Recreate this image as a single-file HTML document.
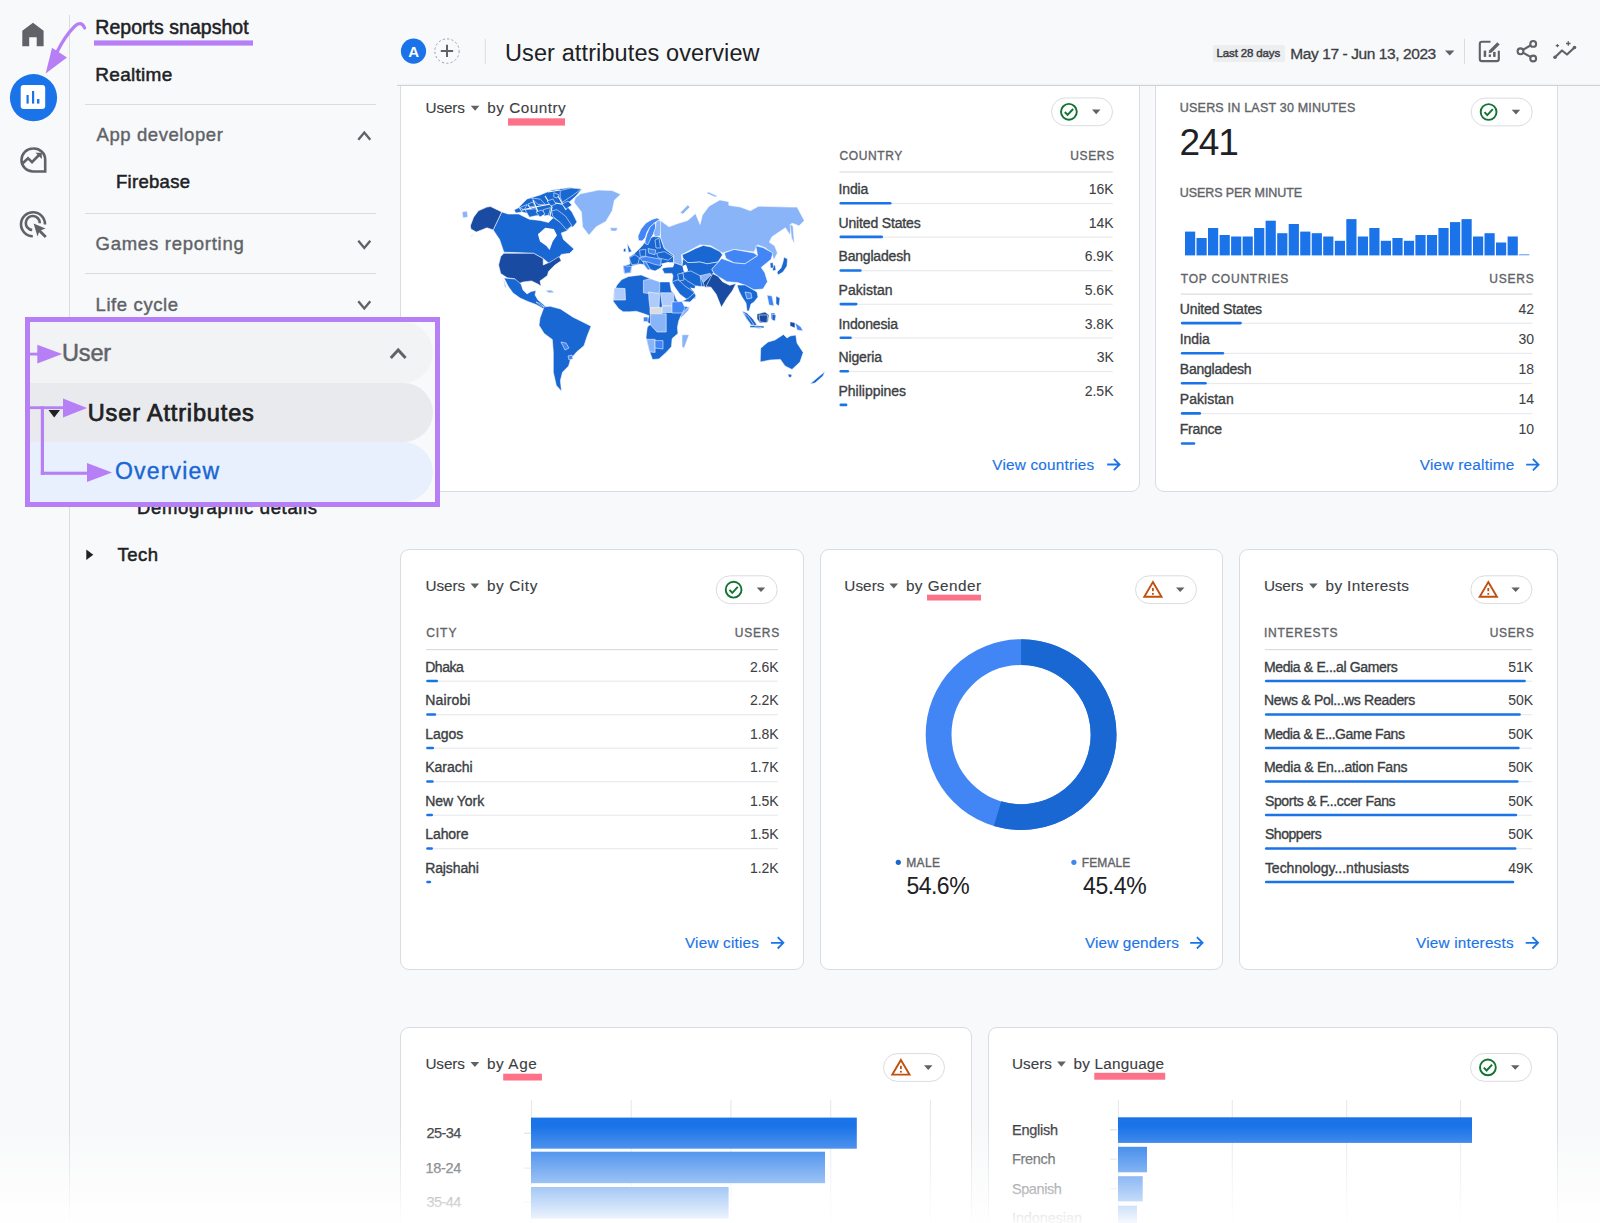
<!DOCTYPE html>
<html><head><meta charset="utf-8"><style>
html,body{margin:0;padding:0}
body{width:1600px;height:1223px;overflow:hidden;position:relative;background:#f8f9fa;font-family:"Liberation Sans",sans-serif}
.abs{position:absolute}
.t{position:absolute;white-space:pre;font-family:"Liberation Sans",sans-serif}
.card{position:absolute;box-sizing:border-box;background:#fff;border:1px solid #dadce0;border-radius:9px}
</style></head><body>
<div class="card" style="left:400.0px;top:71.6px;width:740.0px;height:420.4px"></div><div class="card" style="left:1155.0px;top:71.6px;width:403.2px;height:420.6px"></div><div class="card" style="left:400.0px;top:549.4px;width:403.6px;height:420.6px"></div><div class="card" style="left:819.7px;top:549.4px;width:403.0px;height:420.6px"></div><div class="card" style="left:1239.0px;top:549.4px;width:319.2px;height:420.6px"></div><div class="card" style="left:400.0px;top:1027.2px;width:571.5px;height:272.8px"></div><div class="card" style="left:987.7px;top:1027.2px;width:570.3px;height:272.8px"></div>
<svg class="abs" style="left:0;top:0" width="1600" height="1223"><path d="M470.7 105.7 H479.4 L475.1 110.8 Z" fill="#5f6368"/><rect x="508.0" y="118.3" width="57.0" height="7.3" fill="#fd7189"/><rect x="1051.5" y="97.9" width="61" height="27.8" rx="13.9" fill="#fff" stroke="#dadce0" stroke-width="1"/><circle cx="1068.9" cy="111.8" r="7.9" fill="none" stroke="#137333" stroke-width="1.9"/><path d="M1064.8 112.0 L1067.6 114.9 L1073.1 109.0" fill="none" stroke="#137333" stroke-width="1.9"/><path d="M1092.0 109.6 H1100.5 L1096.2 114.2 Z" fill="#5f6368"/><rect x="839.5" y="171.4" width="273.2" height="1.2" fill="#dadce0"/><rect x="839.5" y="202.9" width="273.2" height="1.2" fill="#e8eaed"/><rect x="839.5" y="202.0" width="52.0" height="2.6" rx="1.3" fill="#1a73e8"/><rect x="839.5" y="236.5" width="273.2" height="1.2" fill="#e8eaed"/><rect x="839.5" y="235.6" width="43.5" height="2.6" rx="1.3" fill="#1a73e8"/><rect x="839.5" y="270.1" width="273.2" height="1.2" fill="#e8eaed"/><rect x="839.5" y="269.2" width="22.2" height="2.6" rx="1.3" fill="#1a73e8"/><rect x="839.5" y="303.7" width="273.2" height="1.2" fill="#e8eaed"/><rect x="839.5" y="302.8" width="18.0" height="2.6" rx="1.3" fill="#1a73e8"/><rect x="839.5" y="337.3" width="273.2" height="1.2" fill="#e8eaed"/><rect x="839.5" y="336.4" width="12.3" height="2.6" rx="1.3" fill="#1a73e8"/><rect x="839.5" y="370.9" width="273.2" height="1.2" fill="#e8eaed"/><rect x="839.5" y="370.0" width="9.6" height="2.6" rx="1.3" fill="#1a73e8"/><rect x="839.5" y="403.6" width="7.9" height="2.6" rx="1.3" fill="#1a73e8"/><path d="M1107.2 464.5 H1119.4 M1113.9 458.8 L1119.6 464.5 L1113.9 470.2" fill="none" stroke="#1a73e8" stroke-width="1.8"/><rect x="1471.2" y="98.1" width="61" height="27.8" rx="13.9" fill="#fff" stroke="#dadce0" stroke-width="1"/><circle cx="1488.6" cy="112.0" r="7.9" fill="none" stroke="#137333" stroke-width="1.9"/><path d="M1484.5 112.2 L1487.3 115.1 L1492.8 109.2" fill="none" stroke="#137333" stroke-width="1.9"/><path d="M1511.7 109.8 H1520.2 L1516.0 114.4 Z" fill="#5f6368"/><rect x="1185.0" y="231.6" width="10.2" height="23.8" fill="#1a73e8"/><rect x="1196.5" y="238.0" width="10.2" height="17.4" fill="#1a73e8"/><rect x="1208.0" y="228.0" width="10.2" height="27.4" fill="#1a73e8"/><rect x="1219.6" y="235.0" width="10.2" height="20.4" fill="#1a73e8"/><rect x="1231.1" y="236.5" width="10.2" height="18.9" fill="#1a73e8"/><rect x="1242.6" y="236.5" width="10.2" height="18.9" fill="#1a73e8"/><rect x="1254.1" y="228.0" width="10.2" height="27.4" fill="#1a73e8"/><rect x="1265.6" y="220.7" width="10.2" height="34.7" fill="#1a73e8"/><rect x="1277.2" y="233.2" width="10.2" height="22.2" fill="#1a73e8"/><rect x="1288.7" y="224.0" width="10.2" height="31.4" fill="#1a73e8"/><rect x="1300.2" y="231.6" width="10.2" height="23.8" fill="#1a73e8"/><rect x="1311.7" y="233.2" width="10.2" height="22.2" fill="#1a73e8"/><rect x="1323.2" y="236.5" width="10.2" height="18.9" fill="#1a73e8"/><rect x="1334.8" y="240.8" width="10.2" height="14.6" fill="#1a73e8"/><rect x="1346.3" y="219.1" width="10.2" height="36.3" fill="#1a73e8"/><rect x="1357.8" y="236.5" width="10.2" height="18.9" fill="#1a73e8"/><rect x="1369.3" y="228.0" width="10.2" height="27.4" fill="#1a73e8"/><rect x="1380.8" y="240.8" width="10.2" height="14.6" fill="#1a73e8"/><rect x="1392.4" y="238.0" width="10.2" height="17.4" fill="#1a73e8"/><rect x="1403.9" y="240.8" width="10.2" height="14.6" fill="#1a73e8"/><rect x="1415.4" y="235.0" width="10.2" height="20.4" fill="#1a73e8"/><rect x="1426.9" y="235.0" width="10.2" height="20.4" fill="#1a73e8"/><rect x="1438.4" y="228.0" width="10.2" height="27.4" fill="#1a73e8"/><rect x="1450.0" y="222.1" width="10.2" height="33.3" fill="#1a73e8"/><rect x="1461.5" y="219.1" width="10.2" height="36.3" fill="#1a73e8"/><rect x="1473.0" y="236.5" width="10.2" height="18.9" fill="#1a73e8"/><rect x="1484.5" y="233.2" width="10.2" height="22.2" fill="#1a73e8"/><rect x="1496.0" y="242.5" width="10.2" height="12.9" fill="#1a73e8"/><rect x="1507.6" y="236.5" width="10.2" height="18.9" fill="#1a73e8"/><rect x="1519.1" y="254" width="10.2" height="1.4" fill="#8ab4f8"/><rect x="1180.8" y="293.5" width="351.6" height="1.2" fill="#dadce0"/><rect x="1180.8" y="322.7" width="351.6" height="1.2" fill="#e8eaed"/><rect x="1180.8" y="321.8" width="61.0" height="2.6" rx="1.3" fill="#1a73e8"/><rect x="1180.8" y="352.8" width="351.6" height="1.2" fill="#e8eaed"/><rect x="1180.8" y="351.9" width="43.4" height="2.6" rx="1.3" fill="#1a73e8"/><rect x="1180.8" y="382.9" width="351.6" height="1.2" fill="#e8eaed"/><rect x="1180.8" y="382.0" width="26.0" height="2.6" rx="1.3" fill="#1a73e8"/><rect x="1180.8" y="413.0" width="351.6" height="1.2" fill="#e8eaed"/><rect x="1180.8" y="412.1" width="20.3" height="2.6" rx="1.3" fill="#1a73e8"/><rect x="1180.8" y="442.2" width="14.5" height="2.6" rx="1.3" fill="#1a73e8"/><path d="M1526.2 464.7 H1538.4 M1532.9 459.0 L1538.6 464.7 L1532.9 470.4" fill="none" stroke="#1a73e8" stroke-width="1.8"/><path d="M470.5 583.5 H479.2 L474.9 588.6 Z" fill="#5f6368"/><rect x="716.2" y="575.8" width="61" height="27.8" rx="13.9" fill="#fff" stroke="#dadce0" stroke-width="1"/><circle cx="733.6" cy="589.7" r="7.9" fill="none" stroke="#137333" stroke-width="1.9"/><path d="M729.5 589.9 L732.3 592.8 L737.8 586.9" fill="none" stroke="#137333" stroke-width="1.9"/><path d="M756.7 587.5 H765.2 L761.0 592.1 Z" fill="#5f6368"/><rect x="426.2" y="649.0" width="351.7" height="1.2" fill="#dadce0"/><rect x="426.2" y="680.6" width="351.7" height="1.2" fill="#e8eaed"/><rect x="426.2" y="679.7" width="11.9" height="2.6" rx="1.3" fill="#1a73e8"/><rect x="426.2" y="714.1" width="351.7" height="1.2" fill="#e8eaed"/><rect x="426.2" y="713.2" width="10.0" height="2.6" rx="1.3" fill="#1a73e8"/><rect x="426.2" y="747.6" width="351.7" height="1.2" fill="#e8eaed"/><rect x="426.2" y="746.7" width="7.9" height="2.6" rx="1.3" fill="#1a73e8"/><rect x="426.2" y="781.1" width="351.7" height="1.2" fill="#e8eaed"/><rect x="426.2" y="780.2" width="7.5" height="2.6" rx="1.3" fill="#1a73e8"/><rect x="426.2" y="814.6" width="351.7" height="1.2" fill="#e8eaed"/><rect x="426.2" y="813.7" width="6.8" height="2.6" rx="1.3" fill="#1a73e8"/><rect x="426.2" y="848.1" width="351.7" height="1.2" fill="#e8eaed"/><rect x="426.2" y="847.2" width="6.8" height="2.6" rx="1.3" fill="#1a73e8"/><rect x="426.2" y="880.7" width="5.0" height="2.6" rx="1.3" fill="#1a73e8"/><path d="M771.0 942.8 H783.2 M777.7 937.1 L783.4 942.8 L777.7 948.5" fill="none" stroke="#1a73e8" stroke-width="1.8"/><path d="M889.4 583.5 H898.1 L893.8 588.6 Z" fill="#5f6368"/><rect x="927.0" y="594.7" width="54.0" height="5.8" fill="#fd7189"/><rect x="1135.5" y="575.8" width="61" height="27.8" rx="13.9" fill="#fff" stroke="#dadce0" stroke-width="1"/><path d="M1152.9 582.1 L1161.5 596.8 L1144.3 596.8 Z" fill="none" stroke="#c0500e" stroke-width="1.9" stroke-linejoin="miter"/><rect x="1152.0" y="588.0" width="1.8" height="3.2" fill="#c0500e"/><rect x="1152.0" y="593.0" width="1.8" height="1.8" fill="#c0500e"/><path d="M1176.0 587.5 H1184.5 L1180.2 592.1 Z" fill="#5f6368"/><circle cx="1021.1" cy="734.6" r="82.5" fill="none" stroke="#4285f4" stroke-width="25.8"/><path d="M1021.1 652.1 A82.5 82.5 0 1 1 997.59 813.68" fill="none" stroke="#1967d2" stroke-width="25.8"/><circle cx="898.3" cy="862.3" r="2.6" fill="#1967d2"/><circle cx="1073.9" cy="862.3" r="2.6" fill="#4285f4"/><path d="M1190.2 942.8 H1202.4 M1196.9 937.1 L1202.6 942.8 L1196.9 948.5" fill="none" stroke="#1a73e8" stroke-width="1.8"/><path d="M1309.0 583.5 H1317.7 L1313.3 588.6 Z" fill="#5f6368"/><rect x="1470.9" y="575.8" width="61" height="27.8" rx="13.9" fill="#fff" stroke="#dadce0" stroke-width="1"/><path d="M1488.3 582.1 L1496.9 596.8 L1479.7 596.8 Z" fill="none" stroke="#c0500e" stroke-width="1.9" stroke-linejoin="miter"/><rect x="1487.4" y="588.0" width="1.8" height="3.2" fill="#c0500e"/><rect x="1487.4" y="593.0" width="1.8" height="1.8" fill="#c0500e"/><path d="M1511.4 587.5 H1519.9 L1515.7 592.1 Z" fill="#5f6368"/><rect x="1264.9" y="649.0" width="267.4" height="1.2" fill="#dadce0"/><rect x="1264.9" y="680.6" width="267.4" height="1.2" fill="#e8eaed"/><rect x="1264.9" y="679.7" width="260.9" height="2.6" rx="1.3" fill="#1a73e8"/><rect x="1264.9" y="714.1" width="267.4" height="1.2" fill="#e8eaed"/><rect x="1264.9" y="713.2" width="255.9" height="2.6" rx="1.3" fill="#1a73e8"/><rect x="1264.9" y="747.6" width="267.4" height="1.2" fill="#e8eaed"/><rect x="1264.9" y="746.7" width="254.8" height="2.6" rx="1.3" fill="#1a73e8"/><rect x="1264.9" y="781.1" width="267.4" height="1.2" fill="#e8eaed"/><rect x="1264.9" y="780.2" width="253.7" height="2.6" rx="1.3" fill="#1a73e8"/><rect x="1264.9" y="814.6" width="267.4" height="1.2" fill="#e8eaed"/><rect x="1264.9" y="813.7" width="252.3" height="2.6" rx="1.3" fill="#1a73e8"/><rect x="1264.9" y="848.1" width="267.4" height="1.2" fill="#e8eaed"/><rect x="1264.9" y="847.2" width="251.5" height="2.6" rx="1.3" fill="#1a73e8"/><rect x="1264.9" y="880.7" width="249.4" height="2.6" rx="1.3" fill="#1a73e8"/><path d="M1525.7 942.8 H1537.9 M1532.4 937.1 L1538.1 942.8 L1532.4 948.5" fill="none" stroke="#1a73e8" stroke-width="1.8"/><path d="M470.5 1061.9 H479.2 L474.9 1067.0 Z" fill="#5f6368"/><rect x="503.2" y="1073.7" width="38.7" height="6.8" fill="#fd7189"/><rect x="883.5" y="1053.6" width="61" height="27.8" rx="13.9" fill="#fff" stroke="#dadce0" stroke-width="1"/><path d="M900.9 1059.9 L909.5 1074.6 L892.3 1074.6 Z" fill="none" stroke="#c0500e" stroke-width="1.9" stroke-linejoin="miter"/><rect x="900.0" y="1065.8" width="1.8" height="3.2" fill="#c0500e"/><rect x="900.0" y="1070.8" width="1.8" height="1.8" fill="#c0500e"/><path d="M924.0 1065.3 H932.5 L928.2 1069.9 Z" fill="#5f6368"/><rect x="530.9" y="1100" width="1.2" height="130" fill="#e8eaed"/><rect x="630.6" y="1100" width="1.2" height="130" fill="#e8eaed"/><rect x="730.3" y="1100" width="1.2" height="130" fill="#e8eaed"/><rect x="830.1" y="1100" width="1.2" height="130" fill="#e8eaed"/><rect x="929.8" y="1100" width="1.2" height="130" fill="#e8eaed"/><rect x="531" y="1117.6" width="325.8" height="31.1" fill="#1a73e8"/><rect x="531" y="1151.7" width="294.0" height="31.5" fill="#1a73e8"/><rect x="531" y="1187" width="197.6" height="31.5" fill="#1a73e8"/><rect x="524" y="1132.7" width="7" height="1" fill="#dadce0"/><rect x="524" y="1167.6" width="7" height="1" fill="#dadce0"/><rect x="524" y="1201.4" width="7" height="1" fill="#dadce0"/><path d="M1057.1 1061.6 H1065.8 L1061.4 1066.7 Z" fill="#5f6368"/><rect x="1094.3" y="1072.8" width="70.9" height="6.9" fill="#fd7189"/><rect x="1470.5" y="1053.5" width="61" height="27.8" rx="13.9" fill="#fff" stroke="#dadce0" stroke-width="1"/><circle cx="1487.9" cy="1067.4" r="7.9" fill="none" stroke="#137333" stroke-width="1.9"/><path d="M1483.8 1067.6 L1486.6 1070.5 L1492.1 1064.6" fill="none" stroke="#137333" stroke-width="1.9"/><path d="M1511.0 1065.2 H1519.5 L1515.2 1069.8 Z" fill="#5f6368"/><rect x="1117.8" y="1100" width="1.2" height="130" fill="#e8eaed"/><rect x="1231.7" y="1100" width="1.2" height="130" fill="#e8eaed"/><rect x="1346.0" y="1100" width="1.2" height="130" fill="#e8eaed"/><rect x="1459.9" y="1100" width="1.2" height="130" fill="#e8eaed"/><rect x="1118" y="1117.3" width="354.0" height="25.6" fill="#1a73e8"/><rect x="1118" y="1146.8" width="29.0" height="25.5" fill="#1a73e8"/><rect x="1118" y="1176.2" width="24.7" height="25.2" fill="#1a73e8"/><rect x="1118" y="1205.7" width="19.0" height="25.3" fill="#1a73e8"/><rect x="1110" y="1129.3" width="7" height="1" fill="#dadce0"/><rect x="1110" y="1158.7" width="7" height="1" fill="#dadce0"/><rect x="1110" y="1188.2" width="7" height="1" fill="#dadce0"/><rect x="1110" y="1217.7" width="7" height="1" fill="#dadce0"/><polygon points="501.7,211.9 508.1,214 518.7,214 529.4,219.3 540,220.4 548.5,222.5 553.8,217.2 561.2,221.4 566.6,225.7 571.9,225.7 566.6,231 561.2,233.1 563.4,239.5 574,249.1 569.7,253.3 561.2,254.4 557,260.7 548.5,262.9 543.2,258.6 533.6,253.3 503.9,252.2 499.6,239.5 493.2,229.9" fill="#1967d2" stroke="#fff" stroke-width="0.55" stroke-linejoin="round"/>
<polygon points="537.9,234.2 545.3,227.8 553.8,228.9 557,235.2 552.7,241.6 549.6,250.1 546.4,245.9 540,241.6" fill="#fff" stroke="#fff" stroke-width="0" stroke-linejoin="round"/>
<polygon points="470.4,225.7 473.6,217.2 478.4,210.8 486.9,207.1 490.6,206.6 501.7,211.9 493.2,229.9 486.9,227.8 481.6,229.9 476.2,232.1 470.9,228.9" fill="#1a4ba3" stroke="#fff" stroke-width="0.55" stroke-linejoin="round"/>
<polygon points="476,232 470.4,237.4 472,235.5" fill="#1a4ba3" stroke="#fff" stroke-width="0.55" stroke-linejoin="round"/>
<polygon points="462,212 467,211 468,217 463,218" fill="#8ab4f8" stroke="#fff" stroke-width="0.55" stroke-linejoin="round"/>
<polygon points="519,207 527,199 540,195 552,190 570,187.5 582,189 576,196 566,205 572,212 577,222 573,227 567,226 560,222 552,217 545,214 538,216 530,214 522,212" fill="#1967d2" stroke="#fff" stroke-width="0.55" stroke-linejoin="round"/>
<polyline points="522,210 540,206 556,203 566,205" fill="none" stroke="#fff" stroke-width="1.1"/>
<polyline points="545,196 552,207 550,216" fill="none" stroke="#fff" stroke-width="1.1"/>
<polyline points="533,200 538,212" fill="none" stroke="#fff" stroke-width="1.1"/>
<polyline points="558,196 566,210" fill="none" stroke="#fff" stroke-width="1.1"/>
<polyline points="528,205 534,213" fill="none" stroke="#fff" stroke-width="1.1"/>
<polyline points="548,192 560,190" fill="none" stroke="#fff" stroke-width="1.1"/>
<polygon points="560.2,190.6 570.8,188 581.4,189 571.9,195.9 562.3,202.3 560.2,197" fill="#1967d2" stroke="#fff" stroke-width="0.55" stroke-linejoin="round"/>
<polygon points="551.7,210.8 557,209.7 565.5,216.1 571.9,225.7 566.6,229.9 560.2,222.5 552.7,216.1" fill="#1967d2" stroke="#fff" stroke-width="0.55" stroke-linejoin="round"/>
<polygon points="525.1,209.7 535.7,208.7 538.9,215.1 529.4,217.2" fill="#1967d2" stroke="#fff" stroke-width="0.55" stroke-linejoin="round"/>
<polygon points="519.8,207.6 527.2,204.4 524.1,209.7" fill="#1967d2" stroke="#fff" stroke-width="0.55" stroke-linejoin="round"/>
<polygon points="531.5,198 540,199.1 545.3,204.4 537.9,204.4" fill="#1967d2" stroke="#fff" stroke-width="0.55" stroke-linejoin="round"/>
<polygon points="543.2,209.7 550.6,207.6 548.5,215.1 544.2,216.1" fill="#1967d2" stroke="#fff" stroke-width="0.55" stroke-linejoin="round"/>
<polygon points="553.8,192.7 559.1,194.9 557,198 553.8,197" fill="#1967d2" stroke="#fff" stroke-width="0.55" stroke-linejoin="round"/>
<polygon points="514,210 519,207.5 522,212 516,213" fill="#1967d2" stroke="#fff" stroke-width="0.55" stroke-linejoin="round"/>
<polygon points="536,212 542,210 545,214 540,217" fill="#1967d2" stroke="#fff" stroke-width="0.55" stroke-linejoin="round"/>
<polygon points="528,204 533,202 535,206 530,207" fill="#1967d2" stroke="#fff" stroke-width="0.55" stroke-linejoin="round"/>
<polygon points="547,201 553,199 556,204 551,206" fill="#1967d2" stroke="#fff" stroke-width="0.55" stroke-linejoin="round"/>
<polygon points="562,204 568,201 572,205 566,209" fill="#1967d2" stroke="#fff" stroke-width="0.55" stroke-linejoin="round"/>
<polygon points="503.9,253.3 533.6,253.3 543.2,258.6 543.2,265 550.6,261.8 559.1,256.5 561.2,260.7 554.9,265 548.5,271.4 547.4,275.6 540,280.9 541.1,286.2 537.9,284.1 531.5,280.9 523,282 517.7,284.1 514.5,278.8 507.1,277.7 500.7,273.5 498.6,265 500.7,256.5" fill="#1a4ba3" stroke="#fff" stroke-width="0.55" stroke-linejoin="round"/>
<polygon points="504,278 515,279 521,284 523,290 527,294 531,291.5 536,290.5 535,295 538,300 544,305 547,308 543,308.5 536,304.5 529,302 520,298 513,293 508,286" fill="#1967d2" stroke="#fff" stroke-width="0.55" stroke-linejoin="round"/>
<polygon points="503.2,278.2 506.2,287.4 505,287" fill="#1967d2" stroke="#fff" stroke-width="0.55" stroke-linejoin="round"/>
<polygon points="536,302 540,303.5 544,306.5 541,306" fill="#1967d2" stroke="#fff" stroke-width="0.55" stroke-linejoin="round"/>
<polygon points="545,290.5 551,290 555,292.5 549,293" fill="#8ab4f8" stroke="#fff" stroke-width="0.55" stroke-linejoin="round"/>
<polygon points="575.1,198 580.4,193.8 598.4,190.1 612.2,190.6 620.7,194.3 614.4,200.2 612.2,210.8 605.9,221.4 596.3,226.7 588.9,235.2 582.5,226.7 581.4,211.9 574,202.3" fill="#8ab4f8" stroke="#fff" stroke-width="0.55" stroke-linejoin="round"/>
<polygon points="610.1,227.8 617.6,227.8 616.5,231 611.2,231" fill="#8ab4f8" stroke="#fff" stroke-width="0.55" stroke-linejoin="round"/>
<polygon points="544.1,306.8 550.2,306.3 560.4,308.9 566.6,312.9 572.7,317 582.9,322.1 591.1,326.2 587,336.5 584,345.7 576.8,351.8 570.7,358.9 568.6,366.1 562.5,372.2 560.4,380.4 561.5,391.2 556.3,385.5 553.3,372.2 553.3,351.8 552.3,339.5 544.1,333.4 539,325.2 540,318.1" fill="#1967d2" stroke="#fff" stroke-width="0.55" stroke-linejoin="round"/>
<polygon points="561,342 566,343 569,348 565,350" fill="#4285f4" stroke="#fff" stroke-width="0.55" stroke-linejoin="round"/>
<polygon points="568,356 572,355 573,359 569,360" fill="#4285f4" stroke="#fff" stroke-width="0.55" stroke-linejoin="round"/>
<polygon points="629,257 634,254 638,250 642,246 645,242 650,238 655,236 660.5,237.6 664.4,248.5 673.7,255.5 673.7,262.5 670,263 662,266 660.5,268 655,271 650.4,269.5 645,265 640,264 632,266 631,273 624,273.5 623,266 630,264" fill="#1967d2" stroke="#fff" stroke-width="0.55" stroke-linejoin="round"/>
<polygon points="638,236 641,229 646,223 652,219.5 657,218 660,219.5 655,222.5 650,227 647,232 645,238 642,241 638.5,240.5" fill="#4285f4" stroke="#fff" stroke-width="0.55" stroke-linejoin="round"/>
<polygon points="645,241 647,234 650,227 655,222.5 656,228 654,233 651,238 648,244.6 645.5,244" fill="#4285f4" stroke="#fff" stroke-width="0.55" stroke-linejoin="round"/>
<polygon points="655.5,228 656,222 659,220 661.5,222.5 661.5,230 660,236 655,237 653.5,233" fill="#8ab4f8" stroke="#fff" stroke-width="0.55" stroke-linejoin="round"/>
<polygon points="627.1,243.1 631.8,251.6 628.6,252.4 627.9,248.5" fill="#1967d2" stroke="#fff" stroke-width="0.55" stroke-linejoin="round"/>
<polygon points="623.5,249 625.5,248 626,251.5 623.5,252" fill="#1967d2" stroke="#fff" stroke-width="0.55" stroke-linejoin="round"/>
<polygon points="629.4,257.8 634.9,254.7 639.5,257.8 638,264 631.8,264.8 630.2,260.9" fill="#1967d2" stroke="#fff" stroke-width="0.55" stroke-linejoin="round"/>
<polygon points="623.2,265.6 631.8,266.4 630.2,272.6 624.8,273.4" fill="#4285f4" stroke="#fff" stroke-width="0.55" stroke-linejoin="round"/>
<polygon points="639.5,250.1 645.7,249.3 645.7,256.3 640.3,256.3" fill="#1967d2" stroke="#fff" stroke-width="0.55" stroke-linejoin="round"/>
<polygon points="648,248.5 655.8,250.1 655,254.7 648.8,253.2" fill="#4285f4" stroke="#fff" stroke-width="0.55" stroke-linejoin="round"/>
<polygon points="656.6,253.2 664.4,251.6 672.9,256.3 668.3,260.2 658.2,257.8" fill="#1967d2" stroke="#fff" stroke-width="0.55" stroke-linejoin="round"/>
<polygon points="639.5,257.8 646,256.5 653.5,257.8 661.3,259.4 660.5,265.6 653.5,264 648,262 643,262" fill="#4285f4" stroke="#fff" stroke-width="0.55" stroke-linejoin="round"/>
<polygon points="643.4,261 646,262 650.4,269.5 648,270 644,265" fill="#4285f4" stroke="#fff" stroke-width="0.55" stroke-linejoin="round"/>
<polygon points="655,240 659,238 660.5,248 656,248" fill="#1967d2" stroke="#fff" stroke-width="0.55" stroke-linejoin="round"/>
<polygon points="662,268.7 678.4,267.9 679.1,271.8 664.4,273.4" fill="#1967d2" stroke="#fff" stroke-width="0.55" stroke-linejoin="round"/>
<polygon points="660.5,220.5 669,226.8 677.6,223.6 687.7,220.5 695.5,213.5 700.1,224.4 702.4,215.1 709,206.2 719.8,199.9 728.8,201.7 728.8,205.3 740.5,207.1 750.4,210.7 758.5,206.2 790,207.1 797.1,207.1 804.3,220.6 798.9,226 795.3,224.2 791.7,223.3 789.9,235 785.4,227.8 772,236.8 769.3,242.2 774.7,245.8 777.4,253 773.8,260.2 772,253 764.8,247.6 757.6,244.9 754,252.1 734.2,249.4 722.5,253 710.8,245.8 700,244.9 687.7,251.6 681.5,254.7 682.2,265.6 673.7,262.5 673.7,255.5 664.4,248.5 660.5,237.6" fill="#8ab4f8" stroke="#fff" stroke-width="0.55" stroke-linejoin="round"/>
<polygon points="680,212.8 687.7,205 690,207 683,214" fill="#8ab4f8" stroke="#fff" stroke-width="0.55" stroke-linejoin="round"/>
<polygon points="708,191.8 718,196.3 715,197 707,193.5" fill="#8ab4f8" stroke="#fff" stroke-width="0.55" stroke-linejoin="round"/>
<polygon points="790,224.2 793,226 794.4,244 791.5,238" fill="#8ab4f8" stroke="#fff" stroke-width="0.55" stroke-linejoin="round"/>
<polygon points="682.2,254.7 687.7,252.4 695.5,248.5 703.2,245.4 711,247 720,251.6 722.5,254.8 718,262 707.2,263.8 700,262 692.3,262.5 687.7,262.5 683,258.6" fill="#1967d2" stroke="#fff" stroke-width="0.55" stroke-linejoin="round"/>
<polygon points="690.8,265 703.2,265.6 708,268 703.2,271 693,270" fill="#1967d2" stroke="#fff" stroke-width="0.55" stroke-linejoin="round"/>
<polygon points="724.3,253 734.2,249.4 754,253 757.6,255.7 745,263.8 734.2,262.9 726,258.4" fill="#4285f4" stroke="#fff" stroke-width="0.55" stroke-linejoin="round"/>
<polygon points="711.7,269.2 721.6,258.4 734.2,262.9 745,263.8 757.6,255.7 755.8,245.8 763,247.6 772.9,253 771.1,259.3 761.2,267.4 764.8,272.7 767.5,281.7 763,289 754,289.8 745,285.3 737.8,282.6 727,281.7 718,276.3 713.5,272.7" fill="#4285f4" stroke="#fff" stroke-width="0.55" stroke-linejoin="round"/>
<polygon points="772,266 775,265 776,270 773,271" fill="#1967d2" stroke="#fff" stroke-width="0.55" stroke-linejoin="round"/>
<polygon points="784,257 787.5,259 787,266 783,272 778,275 777,272 781,268 783,262" fill="#1967d2" stroke="#fff" stroke-width="0.55" stroke-linejoin="round"/>
<polygon points="770,263 773,262.5 773.5,268 770.5,268" fill="#1967d2" stroke="#fff" stroke-width="0.55" stroke-linejoin="round"/>
<polygon points="673.7,262.5 682.2,265.6 683,258.6 687.7,262.5 692.3,262.5 700,262 707.2,263.8 718,262 721.6,258.4 711.7,269.2 713.5,272.7 710.8,277.2 706,286.5 701.7,286.6 695.5,285.8 693.9,292 695.5,298.2 687.7,300 680,294.3 674.5,286.6 672,281.9 673,276 672,273.4 664.4,273.4 662,268.7 670,265" fill="#1967d2" stroke="#fff" stroke-width="0.55" stroke-linejoin="round"/>
<polygon points="682.5,266 686,264.5 688,270 686.5,273.5 683.5,271" fill="#fff" stroke="#fff" stroke-width="0" stroke-linejoin="round"/>
<polygon points="661,263.8 668,262 674.5,263.2 673,267.2 664,267.8" fill="#fff" stroke="#fff" stroke-width="0" stroke-linejoin="round"/>
<polygon points="690,287.5 695,288.5 697,291 693,291" fill="#fff" stroke="#fff" stroke-width="0" stroke-linejoin="round"/>
<polygon points="682.2,272.6 690.8,271 700.1,275.7 701.7,286.6 695.5,285.8 687.7,281.1 683,277.2" fill="#1967d2" stroke="#fff" stroke-width="0.55" stroke-linejoin="round"/>
<polygon points="700.1,275.7 710.2,273.4 711,278 703.2,282.7" fill="#8ab4f8" stroke="#fff" stroke-width="0.55" stroke-linejoin="round"/>
<polygon points="703.2,282.7 711,274.9 714.9,278 711,287.3 704.8,287.3" fill="#1a4ba3" stroke="#fff" stroke-width="0.55" stroke-linejoin="round"/>
<polygon points="672.1,281.9 678.4,279.6 684.6,285.8 693.9,292 695.5,298.2 687.7,300 680,294.3 674.5,286.6" fill="#1967d2" stroke="#fff" stroke-width="0.55" stroke-linejoin="round"/>
<polygon points="677.6,274.1 683,273 684,280 679,281" fill="#1967d2" stroke="#fff" stroke-width="0.55" stroke-linejoin="round"/>
<polygon points="682,301.4 688.5,298.1 694.4,292.8 696,296 690,302" fill="#1967d2" stroke="#fff" stroke-width="0.55" stroke-linejoin="round"/>
<polygon points="712.6,273.6 718,276.3 722.5,281.7 729.7,285.3 736,283.5 732.4,290.7 727,298 721.4,307.3 716.2,294.3 710.8,287.1 706,286.5 710.8,277.2" fill="#1a4ba3" stroke="#fff" stroke-width="0.55" stroke-linejoin="round"/>
<polygon points="737,285 745,285 752,289 757,292 758,297 754,302 751,304 749,311 747,311 746,303 742,297 739,291" fill="#1967d2" stroke="#fff" stroke-width="0.55" stroke-linejoin="round"/>
<polygon points="745,292 751,293 752,298 747,299" fill="#4285f4" stroke="#fff" stroke-width="0.55" stroke-linejoin="round"/>
<polygon points="767,295 772,296 774,306 769,305" fill="#4285f4" stroke="#fff" stroke-width="0.55" stroke-linejoin="round"/>
<polygon points="742,311 747,313 753,319 757,325 753,326 747,320" fill="#1967d2" stroke="#fff" stroke-width="0.55" stroke-linejoin="round"/>
<polygon points="757,314 765,312 769,315 768,322 760,323 757,319" fill="#1a4ba3" stroke="#fff" stroke-width="0.55" stroke-linejoin="round"/>
<polygon points="750,325.5 764,326 764,328 750,327.5" fill="#1967d2" stroke="#fff" stroke-width="0.55" stroke-linejoin="round"/>
<polygon points="771,313 775,313 774,320 771,319" fill="#1967d2" stroke="#fff" stroke-width="0.55" stroke-linejoin="round"/>
<polygon points="743.2,312.6 748,316 753.8,324.8 751,325" fill="#1967d2" stroke="#fff" stroke-width="0.55" stroke-linejoin="round"/>
<polygon points="759,315 767.6,315 767,322.7 760,322" fill="#1a4ba3" stroke="#fff" stroke-width="0.55" stroke-linejoin="round"/>
<polygon points="755,327 761,327.5 761,328.5 755,328" fill="#1967d2" stroke="#fff" stroke-width="0.55" stroke-linejoin="round"/>
<polygon points="772,314 776,315 775,321 772,320" fill="#1967d2" stroke="#fff" stroke-width="0.55" stroke-linejoin="round"/>
<polygon points="790,321.7 795,322.7 795,328 790,326" fill="#1a4ba3" stroke="#fff" stroke-width="0.55" stroke-linejoin="round"/>
<polygon points="795.2,322.7 801,327 803,331 797,330" fill="#4285f4" stroke="#fff" stroke-width="0.55" stroke-linejoin="round"/>
<polygon points="776,296 780,298 779,306 776,304" fill="#1967d2" stroke="#fff" stroke-width="0.55" stroke-linejoin="round"/>
<polygon points="621.7,279.6 628.6,276.5 641.1,274.9 650.4,278.8 659.7,281.9 669.8,281.9 671.4,291.2 674,293 676,299 680.6,305 688.5,307.2 680.6,316.4 678.7,321 677.4,327.5 678,333.4 672.1,338.6 671.5,346.5 666.9,351.7 659,358.9 652.5,359.6 649.2,350.4 646,337.3 647.3,326.9 650.5,324.2 646.6,321.6 649.2,315.7 644,313.8 636.2,311.2 629.6,311.8 623.1,311.8 618.5,308.5 613.3,301.4 613.9,291.5 617,285" fill="#1967d2" stroke="#fff" stroke-width="0.55" stroke-linejoin="round"/>
<polygon points="614,288 625,288.5 625.5,300 614,300" fill="#aecbfa" stroke="#fff" stroke-width="0.55" stroke-linejoin="round"/>
<polygon points="643.4,280.4 650.4,278.8 659.7,281.9 659.7,292.8 653.5,294.3 643.4,292.8" fill="#8ab4f8" stroke="#fff" stroke-width="0.55" stroke-linejoin="round"/>
<polygon points="648.6,292 659.7,293.6 659,308.5 650,308 649,300" fill="#aecbfa" stroke="#fff" stroke-width="0.55" stroke-linejoin="round"/>
<polygon points="660.5,292.8 673.7,292.8 674,306 662.3,306" fill="#aecbfa" stroke="#fff" stroke-width="0.55" stroke-linejoin="round"/>
<polygon points="650,308 662.3,307.2 662,313.8 650,313.8" fill="#dcdcdc" stroke="#fff" stroke-width="0.55" stroke-linejoin="round"/>
<polygon points="662.3,306 672.8,306.5 672.8,312.5 662.3,312.5" fill="#aecbfa" stroke="#fff" stroke-width="0.55" stroke-linejoin="round"/>
<polygon points="672,302 682,301.5 685.2,308 682,313.1 672,313" fill="#4285f4" stroke="#fff" stroke-width="0.55" stroke-linejoin="round"/>
<polygon points="650.5,313.8 666.2,313.8 666.2,332 657,332 650.5,325" fill="#8ab4f8" stroke="#fff" stroke-width="0.55" stroke-linejoin="round"/>
<polygon points="643.4,317 648,317 648,321.6 643.4,321.6" fill="#4285f4" stroke="#fff" stroke-width="0.55" stroke-linejoin="round"/>
<polygon points="646.6,339.3 655.1,339.3 655.1,352.4 649.5,352" fill="#8ab4f8" stroke="#fff" stroke-width="0.55" stroke-linejoin="round"/>
<polygon points="655,340.6 663,340.6 663,349 655,348" fill="#4285f4" stroke="#fff" stroke-width="0.55" stroke-linejoin="round"/>
<polygon points="680.6,316.4 683.9,311.2 689.8,305.9 688.5,310.5 680.6,318.4" fill="#8ab4f8" stroke="#fff" stroke-width="0.55" stroke-linejoin="round"/>
<polygon points="682,334.7 689.1,334.7 684,348.4 682,346.5" fill="#8ab4f8" stroke="#fff" stroke-width="0.55" stroke-linejoin="round"/>
<polygon points="760.7,348.2 768,342 775,340 783.5,334.4 787,338 790,336 795.8,335 797,343 803.2,352.5 800,362 792,369.5 785,366 780.4,359.4 770,360 760.2,362" fill="#1967d2" stroke="#fff" stroke-width="0.55" stroke-linejoin="round"/>
<polygon points="788,374 792,374.5 791,377.5 788.5,377" fill="#1967d2" stroke="#fff" stroke-width="0.55" stroke-linejoin="round"/>
<polygon points="810,384 817,378 825,371.6 823,376 815,383" fill="#1967d2" stroke="#fff" stroke-width="0.55" stroke-linejoin="round"/></svg>
<div class="abs" style="left:71px;top:0;width:1529px;height:85px;background:#f8f9fa"></div>
<div class="abs" style="left:68.5px;top:15px;width:1.3px;height:1208px;background:#dadce0"></div>
<svg class="abs" style="left:0;top:0" width="60" height="60">
<path d="M22.3 30.8 L33 22.8 L43.6 30.8 V46.2 H36.7 V37.2 H29.2 V46.2 H22.3 Z" fill="#5f6368"/></svg>
<svg class="abs" style="left:8px;top:72px" width="52" height="52" viewBox="0 0 52 52">
<circle cx="25.5" cy="25.7" r="23.6" fill="#1a73e8"/>
<rect x="12.7" y="13" width="24.5" height="24" rx="3" fill="#fff"/>
<rect x="18.5" y="23" width="2.2" height="8.6" fill="#1a73e8"/>
<rect x="24" y="19" width="2.2" height="12.6" fill="#1a73e8"/>
<rect x="29" y="27" width="2.4" height="4.6" fill="#1a73e8"/></svg>
<svg class="abs" style="left:17px;top:144px" width="32" height="32" viewBox="0 0 32 32">
<path d="M16 4.5 A11.3 11.3 0 1 0 16 27.5 H28.2 V16 A11.3 11.3 0 0 0 16 4.5 Z" fill="none" stroke="#5f6368" stroke-width="2.6"/>
<path d="M5.5 19.5 L11 14.2 L15 18.2 L22.5 10.5" fill="none" stroke="#5f6368" stroke-width="2.6"/>
<path d="M18.5 8.8 H24.8 V15 Z" fill="#5f6368"/>
<circle cx="25.3" cy="24.6" r="1.1" fill="#fff"/></svg>
<svg class="abs" style="left:17px;top:207px" width="32" height="32" viewBox="0 0 32 32">
<path d="M28 17.5 A12 12 0 1 0 15.8 29.3" fill="none" stroke="#5f6368" stroke-width="2.6"/>
<path d="M22.8 16.2 A7 7 0 1 0 15.2 23" fill="none" stroke="#5f6368" stroke-width="2.6"/>
<path d="M16.6 16.5 L28.5 21.5 L24 23.3 L29.8 29.1 L27.8 31.1 L22 25.3 L20.5 29.5 Z" fill="#5f6368"/></svg>
<div class="abs" style="left:85px;top:103.9px;width:291px;height:1.2px;background:#dadce0"></div>
<div class="abs" style="left:85px;top:212.8px;width:291px;height:1.2px;background:#dadce0"></div>
<div class="abs" style="left:85px;top:273.3px;width:291px;height:1.2px;background:#dadce0"></div>
<svg class="abs" style="left:0;top:0" width="1600" height="1223"><path d="M358.3 139.8 L364.3 132.6 L370.3 139.8" fill="none" stroke="#5f6368" stroke-width="2.4"/></svg>
<svg class="abs" style="left:0;top:0" width="1600" height="1223"><path d="M358.3 240.7 L364.3 247.9 L370.3 240.7" fill="none" stroke="#5f6368" stroke-width="2.4"/></svg>
<svg class="abs" style="left:0;top:0" width="1600" height="1223"><path d="M358.3 301.2 L364.3 308.4 L370.3 301.2" fill="none" stroke="#5f6368" stroke-width="2.4"/></svg>
<svg class="abs" style="left:0;top:0" width="1600" height="1223"><path d="M86.3 549.5 L93.3 554.8 L86.3 560 Z" fill="#202124"/></svg>
<div class="abs" style="left:397px;top:85px;width:1203px;height:1px;background:#cfd1d4"></div><div class="abs" style="left:397px;top:83px;width:1203px;height:2px;background:linear-gradient(to bottom,rgba(0,0,0,0),rgba(0,0,0,0.03))"></div>
<svg class="abs" style="left:0;top:0" width="1600" height="100">
<circle cx="413.5" cy="51.1" r="12.6" fill="#1a73e8"/>
<circle cx="447" cy="51.1" r="12.2" fill="none" stroke="#9aa0a6" stroke-width="1" stroke-dasharray="2.2 2.2"/>
<path d="M447 44.8 V57 M440.8 50.9 H453.1" stroke="#5f6368" stroke-width="2"/>
<rect x="484.8" y="38.8" width="1" height="25" fill="#dadce0"/>
<rect x="1213" y="45" width="72" height="17" rx="2" fill="#eceef0"/>
<path d="M1445 50.6 H1454.4 L1449.7 55.6 Z" fill="#5f6368"/>
<rect x="1464" y="38.8" width="1" height="25" fill="#dadce0"/>
<!-- customize icon -->
<path d="M1490.5 41.8 H1482 Q1479.8 41.8 1479.8 44 V58.9 Q1479.8 61.1 1482 61.1 H1496.6 Q1498.8 61.1 1498.8 58.9 V50.8" fill="none" stroke="#5f6368" stroke-width="2.1"/>
<path d="M1488.6 53.2 L1489.3 50.2 L1497.3 42.2 L1499.7 44.6 L1491.7 52.6 Z" fill="#5f6368"/>
<rect x="1483.7" y="50.6" width="2.5" height="6.3" fill="#5f6368"/>
<rect x="1488.7" y="54.4" width="2.3" height="2.5" fill="#5f6368"/>
<rect x="1493.1" y="51.9" width="2.5" height="5" fill="#5f6368"/>
<!-- share -->
<path d="M1520.5 51.3 L1532.8 44 M1520.5 51.3 L1532.8 58.2" stroke="#5f6368" stroke-width="2.1"/>
<circle cx="1520.5" cy="51.3" r="2.9" fill="#f8f9fa" stroke="#5f6368" stroke-width="2.1"/>
<circle cx="1533.2" cy="43.9" r="2.9" fill="#f8f9fa" stroke="#5f6368" stroke-width="2.1"/>
<circle cx="1533.2" cy="58.5" r="2.9" fill="#f8f9fa" stroke="#5f6368" stroke-width="2.1"/>
<!-- insights -->
<path d="M1555 57.3 L1562 50.5 L1567 54.5 L1574.5 47.5" fill="none" stroke="#5f6368" stroke-width="2.2" stroke-linecap="round" stroke-linejoin="round"/>
<circle cx="1555" cy="57.3" r="1.8" fill="#5f6368"/><circle cx="1574.5" cy="47.5" r="1.8" fill="#5f6368"/>
<path d="M1555.7 45.6 h3.4 M1557.4 43.9 v3.4" stroke="#5f6368" stroke-width="1.1"/>
<path d="M1566 43.5 h4.6 M1568.3 41.2 v4.6" stroke="#5f6368" stroke-width="1.4"/>
</svg>
<div class="t" style="left:137.00px;top:498.54px;font-size:18.5px;line-height:18.5px;font-weight:normal;color:#202124;letter-spacing:0.633px;-webkit-text-stroke:0.5px #202124;">Demographic details</div>
<svg class="abs" style="left:0;top:0" width="1600" height="1223"><rect x="94" y="40.4" width="159" height="5.2" fill="#b77ff6"/><path d="M84.6 28 C82.5 22.5 78.5 22.5 74.5 26.5 C68 33 61.5 43 57 52" fill="none" stroke="#b77ff6" stroke-width="3.2" stroke-linecap="round"/><path d="M45.7 73.4 L52 47.8 L67 57.6 Z" fill="#b77ff6"/></svg>
<div style="position:absolute;left:0;top:0;z-index:5">
<div class="abs" style="left:25.3px;top:317px;width:414.7px;height:189.7px;box-sizing:border-box;border:5px solid #b77ff6;background:#f8f9fa;overflow:hidden">
 <div class="abs" style="left:0;top:0;width:402.5px;height:61.2px;background:#f1f3f4;border-radius:0 31px 31px 0"></div>
 <div class="abs" style="left:0;top:61.2px;width:402.5px;height:58.5px;background:#e8eaed;border-radius:0 30px 30px 0"></div>
 <div class="abs" style="left:0;top:119.7px;width:402.5px;height:60px;background:#e8f0fe;border-radius:0 30px 30px 0"></div>
</div><svg class="abs" style="left:0;top:0" width="1600" height="1223">
<path d="M390.8 358 L398.2 350 L405.6 358" fill="none" stroke="#5f6368" stroke-width="2.9"/>
<path d="M48.5 410 H60 L54.2 417.5 Z" fill="#202124"/>
<rect x="30" y="352.7" width="10" height="2.8" fill="#b77ff6"/>
<path d="M37.3 344.8 L62.2 354.1 L37.3 363.4 Z" fill="#b77ff6"/>
<rect x="30" y="406.3" width="36" height="2.8" fill="#b77ff6"/>
<path d="M63 398.6 L87 408 L63 417.5 Z" fill="#b77ff6"/>
<rect x="40.8" y="406.3" width="3.2" height="68.5" fill="#b77ff6"/>
<rect x="40.8" y="471.7" width="50" height="3.1" fill="#b77ff6"/>
<path d="M87 463 L112 472.5 L87 482 Z" fill="#b77ff6"/>
</svg></div>
<div style="position:absolute;left:0;top:0;z-index:6">
<div class="t" style="left:95.30px;top:17.89px;font-size:19.5px;line-height:19.5px;font-weight:normal;color:#202124;letter-spacing:0.033px;-webkit-text-stroke:0.5px #202124;">Reports snapshot</div>
<div class="t" style="left:95.30px;top:65.21px;font-size:19px;line-height:19px;font-weight:normal;color:#202124;letter-spacing:0.286px;-webkit-text-stroke:0.5px #202124;">Realtime</div>
<div class="t" style="left:96.50px;top:126.04px;font-size:18.5px;line-height:18.5px;font-weight:normal;color:#5f6368;letter-spacing:0.583px;-webkit-text-stroke:0.4px #5f6368;">App developer</div>
<div class="t" style="left:116.00px;top:173.44px;font-size:18.5px;line-height:18.5px;font-weight:normal;color:#202124;letter-spacing:0.286px;-webkit-text-stroke:0.5px #202124;">Firebase</div>
<div class="t" style="left:95.50px;top:235.04px;font-size:18.5px;line-height:18.5px;font-weight:normal;color:#5f6368;letter-spacing:0.750px;-webkit-text-stroke:0.4px #5f6368;">Games reporting</div>
<div class="t" style="left:95.50px;top:295.64px;font-size:18.5px;line-height:18.5px;font-weight:normal;color:#5f6368;letter-spacing:0.611px;-webkit-text-stroke:0.4px #5f6368;">Life cycle</div>
<div class="t" style="left:117.40px;top:545.84px;font-size:18.5px;line-height:18.5px;font-weight:normal;color:#202124;letter-spacing:0.533px;-webkit-text-stroke:0.5px #202124;">Tech</div>
<div class="t" style="left:408.30px;top:44.10px;font-size:15px;line-height:15px;font-weight:bold;color:#fff;letter-spacing:0.000px;">A</div>
<div class="t" style="left:505.00px;top:41.80px;font-size:23.5px;line-height:23.5px;font-weight:normal;color:#202124;letter-spacing:0.109px;">User attributes overview</div>
<div class="t" style="left:1216.50px;top:48.06px;font-size:11.5px;line-height:11.5px;font-weight:normal;color:#3c4043;letter-spacing:-0.136px;-webkit-text-stroke:0.45px #3c4043;">Last 28 days</div>
<div class="t" style="left:1290.30px;top:46.18px;font-size:15.5px;line-height:15.5px;font-weight:normal;color:#3c4043;letter-spacing:-0.415px;-webkit-text-stroke:0.3px #3c4043;">May 17 - Jun 13, 2023</div>
<div class="t" style="left:425.60px;top:99.75px;font-size:15.3px;line-height:15.3px;font-weight:normal;color:#3c4043;letter-spacing:-0.175px;-webkit-text-stroke:0.12px #3c4043;">Users</div>
<div class="t" style="left:487.20px;top:99.75px;font-size:15.3px;line-height:15.3px;font-weight:normal;color:#3c4043;letter-spacing:0.511px;-webkit-text-stroke:0.12px #3c4043;">by Country</div>
<div class="t" style="left:839.50px;top:149.54px;font-size:12px;line-height:12px;font-weight:normal;color:#5f6368;letter-spacing:0.600px;-webkit-text-stroke:0.35px #5f6368;">COUNTRY</div>
<div class="t" style="left:1070.30px;top:149.54px;font-size:12px;line-height:12px;font-weight:normal;color:#5f6368;letter-spacing:0.600px;-webkit-text-stroke:0.35px #5f6368;">USERS</div>
<div class="t" style="left:838.50px;top:182.25px;font-size:14px;line-height:14px;font-weight:normal;color:#3c4043;letter-spacing:-0.150px;-webkit-text-stroke:0.35px #3c4043;">India</div>
<div class="t" style="left:1088.70px;top:182.25px;font-size:14px;line-height:14px;font-weight:normal;color:#3c4043;letter-spacing:0.000px;-webkit-text-stroke:0.05px #3c4043;">16K</div>
<div class="t" style="left:838.50px;top:215.85px;font-size:14px;line-height:14px;font-weight:normal;color:#3c4043;letter-spacing:-0.158px;-webkit-text-stroke:0.35px #3c4043;">United States</div>
<div class="t" style="left:1088.70px;top:215.85px;font-size:14px;line-height:14px;font-weight:normal;color:#3c4043;letter-spacing:0.000px;-webkit-text-stroke:0.05px #3c4043;">14K</div>
<div class="t" style="left:838.50px;top:249.45px;font-size:14px;line-height:14px;font-weight:normal;color:#3c4043;letter-spacing:-0.189px;-webkit-text-stroke:0.35px #3c4043;">Bangladesh</div>
<div class="t" style="left:1084.70px;top:249.45px;font-size:14px;line-height:14px;font-weight:normal;color:#3c4043;letter-spacing:0.000px;-webkit-text-stroke:0.05px #3c4043;">6.9K</div>
<div class="t" style="left:838.50px;top:283.05px;font-size:14px;line-height:14px;font-weight:normal;color:#3c4043;letter-spacing:0.043px;-webkit-text-stroke:0.35px #3c4043;">Pakistan</div>
<div class="t" style="left:1084.70px;top:283.05px;font-size:14px;line-height:14px;font-weight:normal;color:#3c4043;letter-spacing:0.000px;-webkit-text-stroke:0.05px #3c4043;">5.6K</div>
<div class="t" style="left:838.50px;top:316.65px;font-size:14px;line-height:14px;font-weight:normal;color:#3c4043;letter-spacing:-0.150px;-webkit-text-stroke:0.35px #3c4043;">Indonesia</div>
<div class="t" style="left:1084.70px;top:316.65px;font-size:14px;line-height:14px;font-weight:normal;color:#3c4043;letter-spacing:0.000px;-webkit-text-stroke:0.05px #3c4043;">3.8K</div>
<div class="t" style="left:838.50px;top:350.25px;font-size:14px;line-height:14px;font-weight:normal;color:#3c4043;letter-spacing:-0.133px;-webkit-text-stroke:0.35px #3c4043;">Nigeria</div>
<div class="t" style="left:1096.70px;top:350.25px;font-size:14px;line-height:14px;font-weight:normal;color:#3c4043;letter-spacing:0.000px;-webkit-text-stroke:0.05px #3c4043;">3K</div>
<div class="t" style="left:838.50px;top:383.85px;font-size:14px;line-height:14px;font-weight:normal;color:#3c4043;letter-spacing:-0.010px;-webkit-text-stroke:0.35px #3c4043;">Philippines</div>
<div class="t" style="left:1084.70px;top:383.85px;font-size:14px;line-height:14px;font-weight:normal;color:#3c4043;letter-spacing:0.000px;-webkit-text-stroke:0.05px #3c4043;">2.5K</div>
<div class="t" style="left:992.30px;top:456.85px;font-size:15.3px;line-height:15.3px;font-weight:normal;color:#1a73e8;letter-spacing:0.208px;-webkit-text-stroke:0.15px #1a73e8;">View countries</div>
<div class="t" style="left:1179.80px;top:102.22px;font-size:12.5px;line-height:12.5px;font-weight:normal;color:#5f6368;letter-spacing:0.209px;-webkit-text-stroke:0.35px #5f6368;">USERS IN LAST 30 MINUTES</div>
<div class="t" style="left:1179.50px;top:124.47px;font-size:37px;line-height:37px;font-weight:normal;color:#202124;letter-spacing:-1.250px;">241</div>
<div class="t" style="left:1179.80px;top:186.92px;font-size:12.5px;line-height:12.5px;font-weight:normal;color:#5f6368;letter-spacing:-0.093px;-webkit-text-stroke:0.35px #5f6368;">USERS PER MINUTE</div>
<div class="t" style="left:1180.80px;top:272.64px;font-size:12px;line-height:12px;font-weight:normal;color:#5f6368;letter-spacing:0.767px;-webkit-text-stroke:0.35px #5f6368;">TOP COUNTRIES</div>
<div class="t" style="left:1489.30px;top:272.64px;font-size:12px;line-height:12px;font-weight:normal;color:#5f6368;letter-spacing:0.775px;-webkit-text-stroke:0.35px #5f6368;">USERS</div>
<div class="t" style="left:1179.80px;top:302.05px;font-size:14px;line-height:14px;font-weight:normal;color:#3c4043;letter-spacing:-0.150px;-webkit-text-stroke:0.35px #3c4043;">United States</div>
<div class="t" style="left:1518.40px;top:302.05px;font-size:14px;line-height:14px;font-weight:normal;color:#3c4043;letter-spacing:0.000px;-webkit-text-stroke:0.05px #3c4043;">42</div>
<div class="t" style="left:1179.80px;top:332.15px;font-size:14px;line-height:14px;font-weight:normal;color:#3c4043;letter-spacing:-0.100px;-webkit-text-stroke:0.35px #3c4043;">India</div>
<div class="t" style="left:1518.40px;top:332.15px;font-size:14px;line-height:14px;font-weight:normal;color:#3c4043;letter-spacing:0.000px;-webkit-text-stroke:0.05px #3c4043;">30</div>
<div class="t" style="left:1179.80px;top:362.25px;font-size:14px;line-height:14px;font-weight:normal;color:#3c4043;letter-spacing:-0.233px;-webkit-text-stroke:0.35px #3c4043;">Bangladesh</div>
<div class="t" style="left:1518.40px;top:362.25px;font-size:14px;line-height:14px;font-weight:normal;color:#3c4043;letter-spacing:0.000px;-webkit-text-stroke:0.05px #3c4043;">18</div>
<div class="t" style="left:1179.80px;top:392.35px;font-size:14px;line-height:14px;font-weight:normal;color:#3c4043;letter-spacing:0.029px;-webkit-text-stroke:0.35px #3c4043;">Pakistan</div>
<div class="t" style="left:1518.40px;top:392.35px;font-size:14px;line-height:14px;font-weight:normal;color:#3c4043;letter-spacing:0.000px;-webkit-text-stroke:0.05px #3c4043;">14</div>
<div class="t" style="left:1179.80px;top:422.45px;font-size:14px;line-height:14px;font-weight:normal;color:#3c4043;letter-spacing:-0.260px;-webkit-text-stroke:0.35px #3c4043;">France</div>
<div class="t" style="left:1518.40px;top:422.45px;font-size:14px;line-height:14px;font-weight:normal;color:#3c4043;letter-spacing:0.000px;-webkit-text-stroke:0.05px #3c4043;">10</div>
<div class="t" style="left:1419.80px;top:457.05px;font-size:15.3px;line-height:15.3px;font-weight:normal;color:#1a73e8;letter-spacing:0.250px;-webkit-text-stroke:0.15px #1a73e8;">View realtime</div>
<div class="t" style="left:425.40px;top:577.55px;font-size:15.3px;line-height:15.3px;font-weight:normal;color:#3c4043;letter-spacing:-0.050px;-webkit-text-stroke:0.12px #3c4043;">Users</div>
<div class="t" style="left:487.00px;top:577.55px;font-size:15.3px;line-height:15.3px;font-weight:normal;color:#3c4043;letter-spacing:0.600px;-webkit-text-stroke:0.12px #3c4043;">by City</div>
<div class="t" style="left:426.20px;top:627.14px;font-size:12px;line-height:12px;font-weight:normal;color:#5f6368;letter-spacing:0.967px;-webkit-text-stroke:0.35px #5f6368;">CITY</div>
<div class="t" style="left:734.70px;top:627.14px;font-size:12px;line-height:12px;font-weight:normal;color:#5f6368;letter-spacing:0.800px;-webkit-text-stroke:0.35px #5f6368;">USERS</div>
<div class="t" style="left:425.20px;top:659.95px;font-size:14px;line-height:14px;font-weight:normal;color:#3c4043;letter-spacing:-0.475px;-webkit-text-stroke:0.35px #3c4043;">Dhaka</div>
<div class="t" style="left:749.90px;top:659.95px;font-size:14px;line-height:14px;font-weight:normal;color:#3c4043;letter-spacing:0.000px;-webkit-text-stroke:0.05px #3c4043;">2.6K</div>
<div class="t" style="left:425.20px;top:693.45px;font-size:14px;line-height:14px;font-weight:normal;color:#3c4043;letter-spacing:0.150px;-webkit-text-stroke:0.35px #3c4043;">Nairobi</div>
<div class="t" style="left:749.90px;top:693.45px;font-size:14px;line-height:14px;font-weight:normal;color:#3c4043;letter-spacing:0.000px;-webkit-text-stroke:0.05px #3c4043;">2.2K</div>
<div class="t" style="left:425.20px;top:726.95px;font-size:14px;line-height:14px;font-weight:normal;color:#3c4043;letter-spacing:0.000px;-webkit-text-stroke:0.35px #3c4043;">Lagos</div>
<div class="t" style="left:749.90px;top:726.95px;font-size:14px;line-height:14px;font-weight:normal;color:#3c4043;letter-spacing:0.000px;-webkit-text-stroke:0.05px #3c4043;">1.8K</div>
<div class="t" style="left:425.20px;top:760.45px;font-size:14px;line-height:14px;font-weight:normal;color:#3c4043;letter-spacing:0.000px;-webkit-text-stroke:0.35px #3c4043;">Karachi</div>
<div class="t" style="left:749.90px;top:760.45px;font-size:14px;line-height:14px;font-weight:normal;color:#3c4043;letter-spacing:0.000px;-webkit-text-stroke:0.05px #3c4043;">1.7K</div>
<div class="t" style="left:425.20px;top:793.95px;font-size:14px;line-height:14px;font-weight:normal;color:#3c4043;letter-spacing:-0.014px;-webkit-text-stroke:0.35px #3c4043;">New York</div>
<div class="t" style="left:749.90px;top:793.95px;font-size:14px;line-height:14px;font-weight:normal;color:#3c4043;letter-spacing:0.000px;-webkit-text-stroke:0.05px #3c4043;">1.5K</div>
<div class="t" style="left:425.20px;top:827.45px;font-size:14px;line-height:14px;font-weight:normal;color:#3c4043;letter-spacing:-0.060px;-webkit-text-stroke:0.35px #3c4043;">Lahore</div>
<div class="t" style="left:749.90px;top:827.45px;font-size:14px;line-height:14px;font-weight:normal;color:#3c4043;letter-spacing:0.000px;-webkit-text-stroke:0.05px #3c4043;">1.5K</div>
<div class="t" style="left:425.20px;top:860.95px;font-size:14px;line-height:14px;font-weight:normal;color:#3c4043;letter-spacing:-0.114px;-webkit-text-stroke:0.35px #3c4043;">Rajshahi</div>
<div class="t" style="left:749.90px;top:860.95px;font-size:14px;line-height:14px;font-weight:normal;color:#3c4043;letter-spacing:0.000px;-webkit-text-stroke:0.05px #3c4043;">1.2K</div>
<div class="t" style="left:685.00px;top:935.15px;font-size:15.3px;line-height:15.3px;font-weight:normal;color:#1a73e8;letter-spacing:0.190px;-webkit-text-stroke:0.15px #1a73e8;">View cities</div>
<div class="t" style="left:844.30px;top:577.55px;font-size:15.3px;line-height:15.3px;font-weight:normal;color:#3c4043;letter-spacing:0.050px;-webkit-text-stroke:0.12px #3c4043;">Users</div>
<div class="t" style="left:905.90px;top:577.55px;font-size:15.3px;line-height:15.3px;font-weight:normal;color:#3c4043;letter-spacing:0.463px;-webkit-text-stroke:0.12px #3c4043;">by Gender</div>
<div class="t" style="left:906.20px;top:857.04px;font-size:12px;line-height:12px;font-weight:normal;color:#5f6368;letter-spacing:0.367px;-webkit-text-stroke:0.35px #5f6368;">MALE</div>
<div class="t" style="left:906.40px;top:874.73px;font-size:23px;line-height:23px;font-weight:normal;color:#202124;letter-spacing:-0.500px;">54.6%</div>
<div class="t" style="left:1081.80px;top:857.04px;font-size:12px;line-height:12px;font-weight:normal;color:#5f6368;letter-spacing:0.100px;-webkit-text-stroke:0.35px #5f6368;">FEMALE</div>
<div class="t" style="left:1083.00px;top:874.73px;font-size:23px;line-height:23px;font-weight:normal;color:#202124;letter-spacing:-0.375px;">45.4%</div>
<div class="t" style="left:1085.00px;top:935.15px;font-size:15.3px;line-height:15.3px;font-weight:normal;color:#1a73e8;letter-spacing:0.127px;-webkit-text-stroke:0.15px #1a73e8;">View genders</div>
<div class="t" style="left:1263.90px;top:577.55px;font-size:15.3px;line-height:15.3px;font-weight:normal;color:#3c4043;letter-spacing:-0.125px;-webkit-text-stroke:0.12px #3c4043;">Users</div>
<div class="t" style="left:1325.50px;top:577.55px;font-size:15.3px;line-height:15.3px;font-weight:normal;color:#3c4043;letter-spacing:0.400px;-webkit-text-stroke:0.12px #3c4043;">by Interests</div>
<div class="t" style="left:1263.90px;top:627.14px;font-size:12px;line-height:12px;font-weight:normal;color:#5f6368;letter-spacing:0.787px;-webkit-text-stroke:0.35px #5f6368;">INTERESTS</div>
<div class="t" style="left:1489.80px;top:627.14px;font-size:12px;line-height:12px;font-weight:normal;color:#5f6368;letter-spacing:0.625px;-webkit-text-stroke:0.35px #5f6368;">USERS</div>
<div class="t" style="left:1263.90px;top:659.95px;font-size:14px;line-height:14px;font-weight:normal;color:#3c4043;letter-spacing:-0.345px;-webkit-text-stroke:0.35px #3c4043;">Media &amp; E...al Gamers</div>
<div class="t" style="left:1508.30px;top:659.95px;font-size:14px;line-height:14px;font-weight:normal;color:#3c4043;letter-spacing:0.000px;-webkit-text-stroke:0.05px #3c4043;">51K</div>
<div class="t" style="left:1263.90px;top:693.45px;font-size:14px;line-height:14px;font-weight:normal;color:#3c4043;letter-spacing:-0.300px;-webkit-text-stroke:0.35px #3c4043;">News &amp; Pol...ws Readers</div>
<div class="t" style="left:1508.30px;top:693.45px;font-size:14px;line-height:14px;font-weight:normal;color:#3c4043;letter-spacing:0.000px;-webkit-text-stroke:0.05px #3c4043;">50K</div>
<div class="t" style="left:1263.90px;top:726.95px;font-size:14px;line-height:14px;font-weight:normal;color:#3c4043;letter-spacing:-0.420px;-webkit-text-stroke:0.35px #3c4043;">Media &amp; E...Game Fans</div>
<div class="t" style="left:1508.30px;top:726.95px;font-size:14px;line-height:14px;font-weight:normal;color:#3c4043;letter-spacing:0.000px;-webkit-text-stroke:0.05px #3c4043;">50K</div>
<div class="t" style="left:1263.90px;top:760.45px;font-size:14px;line-height:14px;font-weight:normal;color:#3c4043;letter-spacing:-0.268px;-webkit-text-stroke:0.35px #3c4043;">Media &amp; En...ation Fans</div>
<div class="t" style="left:1508.30px;top:760.45px;font-size:14px;line-height:14px;font-weight:normal;color:#3c4043;letter-spacing:0.000px;-webkit-text-stroke:0.05px #3c4043;">50K</div>
<div class="t" style="left:1264.90px;top:793.95px;font-size:14px;line-height:14px;font-weight:normal;color:#3c4043;letter-spacing:-0.333px;-webkit-text-stroke:0.35px #3c4043;">Sports &amp; F...ccer Fans</div>
<div class="t" style="left:1508.30px;top:793.95px;font-size:14px;line-height:14px;font-weight:normal;color:#3c4043;letter-spacing:0.000px;-webkit-text-stroke:0.05px #3c4043;">50K</div>
<div class="t" style="left:1264.90px;top:827.45px;font-size:14px;line-height:14px;font-weight:normal;color:#3c4043;letter-spacing:-0.443px;-webkit-text-stroke:0.35px #3c4043;">Shoppers</div>
<div class="t" style="left:1508.30px;top:827.45px;font-size:14px;line-height:14px;font-weight:normal;color:#3c4043;letter-spacing:0.000px;-webkit-text-stroke:0.05px #3c4043;">50K</div>
<div class="t" style="left:1264.90px;top:860.95px;font-size:14px;line-height:14px;font-weight:normal;color:#3c4043;letter-spacing:-0.018px;-webkit-text-stroke:0.35px #3c4043;">Technology...nthusiasts</div>
<div class="t" style="left:1508.30px;top:860.95px;font-size:14px;line-height:14px;font-weight:normal;color:#3c4043;letter-spacing:0.000px;-webkit-text-stroke:0.05px #3c4043;">49K</div>
<div class="t" style="left:1416.00px;top:935.15px;font-size:15.3px;line-height:15.3px;font-weight:normal;color:#1a73e8;letter-spacing:0.200px;-webkit-text-stroke:0.15px #1a73e8;">View interests</div>
<div class="t" style="left:425.40px;top:1055.95px;font-size:15.3px;line-height:15.3px;font-weight:normal;color:#3c4043;letter-spacing:-0.100px;-webkit-text-stroke:0.12px #3c4043;">Users</div>
<div class="t" style="left:487.00px;top:1055.95px;font-size:15.3px;line-height:15.3px;font-weight:normal;color:#3c4043;letter-spacing:0.600px;-webkit-text-stroke:0.12px #3c4043;">by Age</div>
<div class="t" style="left:426.40px;top:1126.42px;font-size:14.5px;line-height:14.5px;font-weight:normal;color:#3c4043;letter-spacing:-0.550px;-webkit-text-stroke:0.25px #3c4043;">25-34</div>
<div class="t" style="left:425.40px;top:1161.32px;font-size:14.5px;line-height:14.5px;font-weight:normal;color:#3c4043;letter-spacing:-0.300px;-webkit-text-stroke:0.25px #3c4043;">18-24</div>
<div class="t" style="left:426.40px;top:1195.12px;font-size:14.5px;line-height:14.5px;font-weight:normal;color:#3c4043;letter-spacing:-0.550px;-webkit-text-stroke:0.25px #3c4043;">35-44</div>
<div class="t" style="left:1012.00px;top:1055.65px;font-size:15.3px;line-height:15.3px;font-weight:normal;color:#3c4043;letter-spacing:0.000px;-webkit-text-stroke:0.12px #3c4043;">Users</div>
<div class="t" style="left:1073.60px;top:1055.65px;font-size:15.3px;line-height:15.3px;font-weight:normal;color:#3c4043;letter-spacing:0.200px;-webkit-text-stroke:0.12px #3c4043;">by Language</div>
<div class="t" style="left:1012.00px;top:1123.02px;font-size:14.5px;line-height:14.5px;font-weight:normal;color:#3c4043;letter-spacing:-0.250px;-webkit-text-stroke:0.25px #3c4043;">English</div>
<div class="t" style="left:1012.00px;top:1152.42px;font-size:14.5px;line-height:14.5px;font-weight:normal;color:#3c4043;letter-spacing:-0.320px;-webkit-text-stroke:0.25px #3c4043;">French</div>
<div class="t" style="left:1012.00px;top:1181.92px;font-size:14.5px;line-height:14.5px;font-weight:normal;color:#3c4043;letter-spacing:-0.433px;-webkit-text-stroke:0.25px #3c4043;">Spanish</div>
<div class="t" style="left:1012.00px;top:1211.42px;font-size:14.5px;line-height:14.5px;font-weight:normal;color:#3c4043;letter-spacing:-0.111px;-webkit-text-stroke:0.25px #3c4043;">Indonesian</div>
<div class="t" style="left:62.00px;top:341.90px;font-size:23.5px;line-height:23.5px;font-weight:normal;color:#5f6368;letter-spacing:-0.167px;-webkit-text-stroke:0.5px #5f6368;z-index:6;">User</div>
<div class="t" style="left:87.80px;top:401.60px;font-size:23.5px;line-height:23.5px;font-weight:normal;color:#202124;letter-spacing:0.850px;-webkit-text-stroke:0.75px #202124;z-index:6;">User Attributes</div>
<div class="t" style="left:115.00px;top:460.43px;font-size:23px;line-height:23px;font-weight:normal;color:#1967d2;letter-spacing:1.186px;-webkit-text-stroke:0.4px #1967d2;z-index:6;">Overview</div>
</div>
<div class="abs" style="left:0;top:1126px;width:1600px;height:97px;z-index:10;background:linear-gradient(to bottom, rgba(255,255,255,0) 0%, rgba(255,255,255,0.96) 100%)"></div>
</body></html>
